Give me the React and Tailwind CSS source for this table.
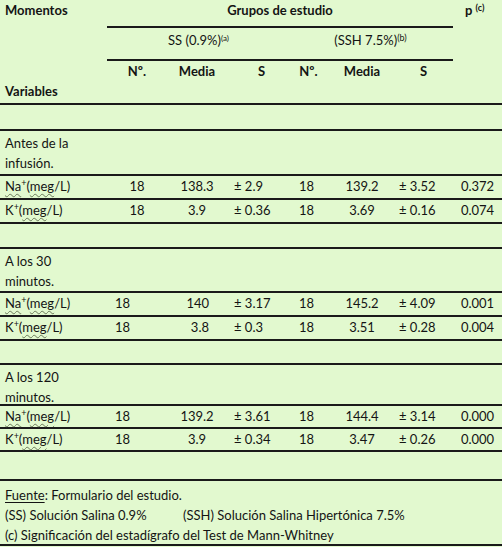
import React from "react";

const LINE = "border-[#1a1a1a]";

function Label({ children }) {
  return <div className="w-[107px] shrink-0 pl-[5px] whitespace-nowrap">{children}</div>;
}

function Ion({ el }) {
  return (
    <span>
      {el === "Na" ? (
        <span className="underline decoration-wavy decoration-[#6b7a5a] decoration-1 underline-offset-2">Na</span>
      ) : (
        <span>K</span>
      )}
      <sup className="text-[9px] top-[-5px]">+</sup>
      <span>(</span>
      <span className="underline decoration-wavy decoration-[#6b7a5a] decoration-1 underline-offset-2">meg</span>
      <span>/L)</span>
    </span>
  );
}

function DataRow({ el, v, shifted, h = "h-[24px]" }) {
  const [n1, m1, s1, n2, m2, s2, p] = v;
  return (
    <div className={`flex items-center ${h} border-b-2 ${LINE}`}>
      <Label>
        <Ion el={el} />
      </Label>
      <div className={`w-[60px] shrink-0 ${shifted ? "pl-[8px]" : "text-center"}`}>{n1}</div>
      <div className={`w-[60px] shrink-0 ${shifted === "r" ? "text-right pr-[18px]" : "text-center"}`}>{m1}</div>
      <div className="w-[53px] shrink-0 pl-[7px] whitespace-nowrap">{s1}</div>
      <div className="w-[53px] shrink-0 text-center">{n2}</div>
      <div className="w-[58px] shrink-0 text-center">{m2}</div>
      <div className="w-[62px] shrink-0 pl-[8px] whitespace-nowrap">{s2}</div>
      <div className="w-[49px] shrink-0 text-center">{p}</div>
    </div>
  );
}

function Blank({ h }) {
  return <div className={`${h} border-b-2 ${LINE}`} />;
}

function Section({ a, b, h }) {
  return (
    <div className={`${h} border-b-2 ${LINE} pl-[5px] pt-[2px] leading-[20px]`}>
      <div>{a}</div>
      <div>{b}</div>
    </div>
  );
}

export default function App() {
  return (
    <div
      className="w-[502px] h-[547px] bg-[#e2f9cf] text-[#141414] text-[13px] overflow-hidden"
      style={{ fontFamily: "Lato, 'Open Sans', sans-serif" }}
    >
      {/* Header */}
      <div className={`flex h-[105px] border-b-2 ${LINE} font-bold`}>
        <div className="w-[107px] shrink-0 pl-[5px] flex flex-col justify-between pt-[1px] pb-[2px]">
          <div>Momentos</div>
          <div>Variables</div>
        </div>
        <div className="w-[346px] shrink-0 flex flex-col">
          <div className={`h-[28px] border-b-2 ${LINE} text-center pt-[1px]`}>Grupos de estudio</div>
          <div className={`h-[33px] border-b-2 ${LINE} flex items-start pt-[3px]`}>
            <div className="w-[173px] text-center pl-[10px] font-normal">
              SS (0.9%)<sup className="text-[8px]">(a)</sup>
            </div>
            <div className="w-[173px] text-center pl-[8px] font-normal">
              (SSH 7.5%)<sup className="text-[9px]">(b)</sup>
            </div>
          </div>
          <div className="flex pt-[1px]">
            <div className="w-[60px] text-center">Nº.</div>
            <div className="w-[60px] text-center">Media</div>
            <div className="w-[53px] pl-[31px]">S</div>
            <div className="w-[53px] text-center pl-[4px]">Nº.</div>
            <div className="w-[58px] text-center">Media</div>
            <div className="w-[62px] pl-[29px]">S</div>
          </div>
        </div>
        <div className="w-[49px] shrink-0 pl-[12px] pt-[1px] whitespace-nowrap">
          p <sup className="text-[9px]">(c)</sup>
        </div>
      </div>

      <Blank h="h-[26px]" />
      <Section a="Antes de la" b="infusión." h="h-[45px]" />
      <DataRow el="Na" v={["18", "138.3", "± 2.9", "18", "139.2", "± 3.52", "0.372"]} />
      <DataRow el="K" v={["18", "3.9", "± 0.36", "18", "3.69", "± 0.16", "0.074"]} />
      <Blank h="h-[25px]" />
      <Section a="A los 30" b="minutos." h="h-[44px]" />
      <DataRow el="Na" shifted="r" v={["18", "140", "± 3.17", "18", "145.2", "± 4.09", "0.001"]} />
      <DataRow el="K" shifted="r" v={["18", "3.8", "± 0.3", "18", "3.51", "± 0.28", "0.004"]} />
      <Blank h="h-[24px]" />
      <Section a="A los 120" b="minutos." h="h-[41px]" />
      <DataRow el="Na" shifted="l" h="h-[23px]" v={["18", "139.2", "± 3.61", "18", "144.4", "± 3.14", "0.000"]} />
      <DataRow el="K" shifted="l" h="h-[23px]" v={["18", "3.9", "± 0.34", "18", "3.47", "± 0.26", "0.000"]} />
      <Blank h="h-[29px]" />
      <div className={`h-[65px] border-b-2 ${LINE} pl-[5px] pt-[4px] leading-[20px] text-[13px]`}>
        <div>
          <span className="underline underline-offset-2">Fuente</span>: Formulario del estudio.
        </div>
        <div className="flex whitespace-nowrap">
          <span className="w-[178px]">(SS) Solución Salina 0.9%</span>
          <span>(SSH) Solución Salina Hipertónica 7.5%</span>
        </div>
        <div>(c) Significación del estadígrafo del Test de Mann-Whitney</div>
      </div>
    </div>
  );
}
